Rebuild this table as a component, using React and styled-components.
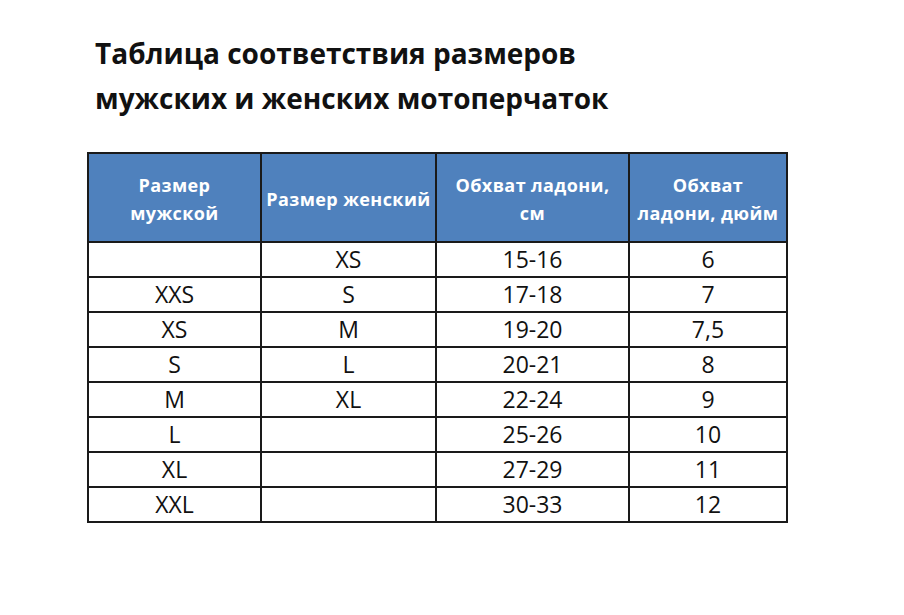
import React from "react";
import styled, { createGlobalStyle } from "styled-components";

const GlobalStyle = createGlobalStyle`
  body {
    margin: 0;
    background: #ffffff;
    font-family: "Open Sans", "Noto Sans", sans-serif;
  }
`;

const rows = [
  ["", "XS", "15-16", "6"],
  ["XXS", "S", "17-18", "7"],
  ["XS", "M", "19-20", "7,5"],
  ["S", "L", "20-21", "8"],
  ["M", "XL", "22-24", "9"],
  ["L", "", "25-26", "10"],
  ["XL", "", "27-29", "11"],
  ["XXL", "", "30-33", "12"],
];

const App = () => {
  return (
    <>
      <GlobalStyle />
      <Page>
        <Title>
          Таблица соответствия размеров
          <br />
          мужских и женских мотоперчаток
        </Title>
        <SizeTable>
          <colgroup>
            <col style={{ width: 173 }} />
            <col style={{ width: 175 }} />
            <col style={{ width: 193 }} />
            <col style={{ width: 158 }} />
          </colgroup>
          <thead>
            <tr>
              <HeadCell>
                Размер
                <br />
                мужской
              </HeadCell>
              <HeadCell>Размер женский</HeadCell>
              <HeadCell>
                Обхват ладони,
                <br />
                см
              </HeadCell>
              <HeadCell>
                Обхват
                <br />
                ладони, дюйм
              </HeadCell>
            </tr>
          </thead>
          <tbody>
            {rows.map((row, i) => (
              <tr key={i}>
                {row.map((cell, j) => (
                  <Cell key={j}>{cell}</Cell>
                ))}
              </tr>
            ))}
          </tbody>
        </SizeTable>
      </Page>
    </>
  );
};

const Page = styled.div`
  width: 904px;
  height: 615px;
  padding: 31px 0 0 87px;
  box-sizing: border-box;
`;

const Title = styled.h1`
  margin: 0 0 0 8px;
  font-size: 28px;
  font-weight: 700;
  line-height: 45px;
  color: #111;
`;

const SizeTable = styled.table`
  margin-top: 31px;
  width: 699px;
  border-collapse: collapse;
  table-layout: fixed;
  border: 2px solid #1a1a1a;
`;

const HeadCell = styled.th`
  height: 85px;
  padding: 2px 0 0;
  background: #4f81bd;
  color: #ffffff;
  font-size: 18px;
  font-weight: 700;
  letter-spacing: 0.4px;
  line-height: 28px;
  text-align: center;
  border: 2px solid #1a1a1a;
`;

const Cell = styled.td`
  height: 33px;
  padding: 0;
  font-size: 23px;
  line-height: 1;
  color: #111;
  text-align: center;
  border: 2px solid #1a1a1a;
`;

export default App;
